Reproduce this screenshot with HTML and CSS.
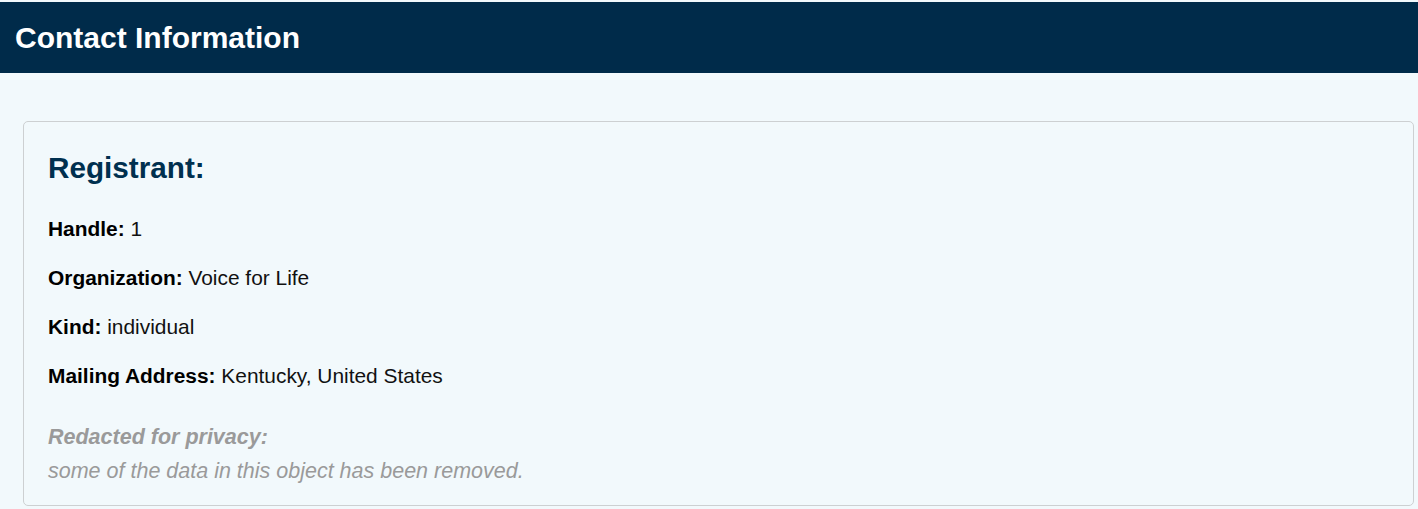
FILE: index.html
```html
<!DOCTYPE html>
<html lang="en">
<head>
<meta charset="utf-8">
<title>Contact Information</title>
<link rel="stylesheet" href="styles.css">
</head>
<body>
<header class="topbar">
  <h1 class="topbar-title">Contact Information</h1>
</header>
<main class="content">
  <section class="card">
    <h2 class="card-title">Registrant:</h2>
    <p class="field"><strong>Handle:</strong> 1</p>
    <p class="field"><strong>Organization:</strong> Voice for Life</p>
    <p class="field"><strong>Kind:</strong> individual</p>
    <p class="field"><strong>Mailing Address:</strong> Kentucky, United States</p>
    <div class="redacted">
      <div class="redacted-title">Redacted for privacy:</div>
      <div class="redacted-text">some of the data in this object has been removed.</div>
    </div>
  </section>
</main>
</body>
</html>
```

FILE: styles.css
```css
html, body {
  margin: 0;
  padding: 0;
}
body {
  background: #f2f9fc;
  font-family: "Liberation Sans", Arial, sans-serif;
  color: #111;
  padding-top: 2px;
}
.topbar {
  height: 71px;
  background: #002b4a;
  display: flex;
  align-items: center;
  padding-left: 15px;
}
.topbar-title {
  margin: 0;
  font-size: 30px;
  font-weight: bold;
  color: #fff;
  line-height: 34px;
}
.content {
  padding: 48px 4px 0 23px;
}
.card {
  border: 1px solid #cdd0d2;
  border-radius: 5px;
  padding: 29px 24px 17px 24px;
  display: flex;
  flex-direction: column;
  gap: 20px;
}
.card-title {
  margin: 0 0 9px 0;
  font-size: 29.7px;
  line-height: 34px;
  font-weight: bold;
  color: #00304f;
}
.field {
  margin: 0;
  font-size: 20.9px;
  line-height: 29px;
  color: #111;
}
.field strong {
  color: #000;
}
.redacted {
  margin-top: 10px;
  font-size: 21.5px;
  line-height: 34px;
  font-style: italic;
  color: #9a9a9a;
}
.redacted-title {
  font-weight: bold;
}
```
